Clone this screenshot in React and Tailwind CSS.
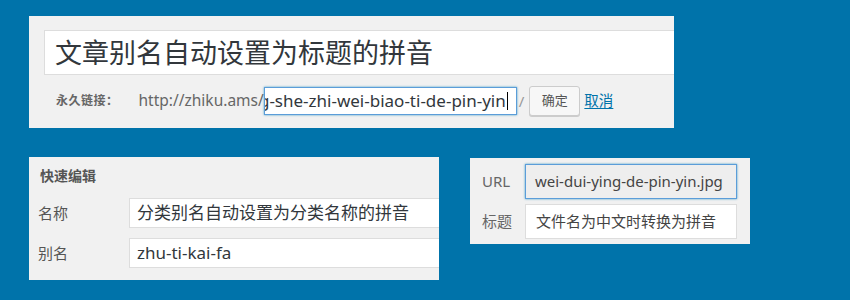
import React from "react";

const font = "font-['Noto_Sans','Noto_Sans_CJK_SC',sans-serif]";

function PostPanel() {
    return (
        <div className="w-[645px] h-[112px] bg-[#f1f1f1] pt-[14px] pl-[15px] pb-[12px] flex flex-col">
            <div className="h-[45px] bg-white border border-[#dddddd] border-r-0 flex items-center pl-[10px] text-[27px] text-[#32373c] leading-none">
                文章别名自动设置为标题的拼音
            </div>
            <div className="mt-[11px] h-[30px] pl-[12px] flex items-center text-[#666666]">
                <span className="text-[12px] font-bold tracking-[0.5px]">永久链接：</span>
                <span className="ml-[20px] text-[15.5px]">http://zhiku.ams/</span>
                <div className="w-[253px] h-[28px] bg-white border border-[#5b9dd9] shadow-[0_0_2px_rgba(30,140,190,0.8)] flex items-center justify-end pr-[8px] overflow-hidden">
                    <span className="shrink-0 whitespace-nowrap text-[17px] text-[#32373c] flex items-center">
                        g-she-zhi-wei-biao-ti-de-pin-yin
                        <span className="w-px h-[18px] bg-black ml-px" />
                    </span>
                </div>
                <span className="ml-[2px] text-[15px] text-[#999999]">/</span>
                <button className="ml-[5px] w-[51px] h-[30px] bg-[#f7f7f7] border border-[#cccccc] rounded-[3px] shadow-[0_1px_0_#cccccc] text-[13px] text-[#555555]">
                    确定
                </button>
                <a className="ml-[4px] text-[14.5px] text-[#0073aa] underline underline-offset-2">取消</a>
            </div>
        </div>
    );
}

function QuickEdit() {
    const rows = [
        { label: "名称", value: "分类别名自动设置为分类名称的拼音" },
        { label: "别名", value: "zhu-ti-kai-fa" },
    ];
    return (
        <div className="w-[410px] h-[123px] bg-[#f1f1f1] pt-[9px] pl-[9px] flex flex-col">
            <div className="pl-[2px] h-[18px] flex items-center text-[14px] font-bold text-[#555555]">快速编辑</div>
            <div className="mt-[14px] flex flex-col gap-[10px]">
                {rows.map(({ label, value }) => (
                    <div key={label} className="flex items-center">
                        <span className="w-[91px] text-[15px] text-[#555555]">{label}</span>
                        <div className="flex-1 h-[30px] bg-white border border-[#dddddd] border-r-0 flex items-center pl-[7px] text-[17px] text-[#32373c] whitespace-nowrap">
                            {value}
                        </div>
                    </div>
                ))}
            </div>
        </div>
    );
}

function Attachment() {
    return (
        <div className="mt-px w-[280px] h-[86px] bg-[#f1f1f1] pt-[6px] pl-[12px] pr-[13px] flex flex-col gap-[5px]">
            <div className="flex items-center">
                <span className="w-[43px] text-[15px] text-[#666666]">URL</span>
                <div className="flex-1 h-[35px] bg-[#eeeeee] border border-[#5b9dd9] shadow-[0_0_2px_rgba(30,140,190,0.8)] flex items-center pl-[9px] text-[15px] text-[#444444] whitespace-nowrap overflow-hidden">
                    wei-dui-ying-de-pin-yin.jpg
                </div>
            </div>
            <div className="flex items-center">
                <span className="w-[43px] text-[15px] text-[#666666]">标题</span>
                <div className="flex-1 h-[35px] bg-white border border-[#dddddd] flex items-center pl-[10px] text-[15px] text-[#444444] whitespace-nowrap">
                    文件名为中文时转换为拼音
                </div>
            </div>
        </div>
    );
}

export default function App() {
    return (
        <div className={`w-[850px] h-[300px] bg-[#0073aa] pt-[16px] pl-[29px] overflow-hidden ${font}`}>
            <PostPanel />
            <div className="mt-[29px] flex items-start gap-[31px]">
                <QuickEdit />
                <Attachment />
            </div>
        </div>
    );
}
